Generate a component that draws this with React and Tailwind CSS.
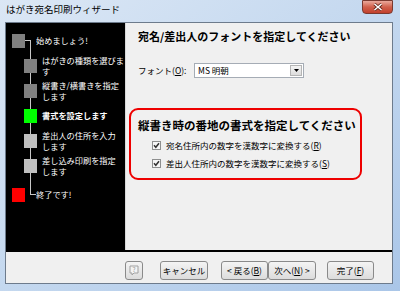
import React from 'react';

const FONT = { fontFamily: '"Noto Sans CJK JP", "Noto Sans", sans-serif' };

// wizard steps: state = done | current | todo | end
const steps = [
  { lines: ['始めましょう!'], state: 'done', top: true },
  { lines: ['はがきの種類を選びま', 'す'], state: 'done' },
  { lines: ['縦書き/横書きを指定', 'します'], state: 'done' },
  { lines: ['書式を設定します'], state: 'current' },
  { lines: ['差出人の住所を入力', 'します'], state: 'todo' },
  { lines: ['差し込み印刷を指定', 'します'], state: 'todo' },
];

const squareColor = {
  done: 'bg-[#808080]',
  current: 'bg-[#00ff00]',
  todo: 'bg-[#c0c0c0]',
  end: 'bg-[#ff0000]',
};

const Step = ({ step }) => (
  <div className="flex items-center h-[25px]">
    <div className={`w-[13px] h-[14px] shrink-0 ${squareColor[step.state]} ${step.top ? 'ml-[6px]' : 'ml-[18px]'}`} />
    <div
      className={`text-white text-[8.2px] leading-[11px] whitespace-nowrap ${step.top ? 'ml-[11px]' : 'ml-[5px]'} ${step.state === 'current' ? 'font-bold' : ''}`}
    >
      {step.lines.map((l, i) => (
        <div key={i}>{l}</div>
      ))}
    </div>
  </div>
);

const Check = () => (
  <svg width="9" height="9" viewBox="0 0 9 9" className="shrink-0">
    <rect x="0.5" y="0.5" width="8" height="8" fill="#f6f6f6" stroke="#8e8f8f" />
    <path d="M2 4.3 L3.8 6.3 L7 2.2" fill="none" stroke="#333" strokeWidth="1.5" />
  </svg>
);

const Button = ({ children, className = '', disabled }) => (
  <div
    className={`h-[19px] flex items-center justify-center rounded-[3px] border border-[#8a8a8a] bg-gradient-to-b from-[#f4f4f4] to-[#dcdcdc] text-[8.5px] ${disabled ? 'text-[#a0a0a0]' : 'text-black'} ${className}`}
  >
    {children}
  </div>
);

export default function App() {
  return (
    <div
      className="w-[400px] h-[291px] relative overflow-hidden bg-gradient-to-br from-[#dbe7f5] via-[#c4d8ef] to-[#aac6e8]"
      style={FONT}
    >
      {/* Title bar */}
      <div className="h-[22px] flex items-start">
        <div className="ml-[6px] mt-[4px] text-[9.5px] leading-[11px] text-black">はがき宛名印刷ウィザード</div>
        <div className="ml-auto mr-[7px] w-[31px] h-[14px] rounded-b-[4px] border border-[#7a3a30] bg-gradient-to-b from-[#e9a99c] via-[#d0604c] to-[#c2402c] flex items-center justify-center">
          <svg width="10" height="8" viewBox="0 0 10 8">
            <path d="M1.5 1 L8.5 7 M8.5 1 L1.5 7" stroke="#5a2418" strokeWidth="3" />
            <path d="M1.5 1 L8.5 7 M8.5 1 L1.5 7" stroke="#ffffff" strokeWidth="1.6" />
          </svg>
        </div>
      </div>

      {/* Client area */}
      <div className="ml-[5px] w-[388px] h-[262px] border border-[#6d7b8c] bg-[#f0f0f0] flex flex-col">
        <div className="flex h-[229px] border-b-2 border-black">
          {/* Sidebar */}
          <div className="w-[119px] bg-black relative pt-[5px] overflow-hidden">
            <div className="absolute left-[24px] top-[17px] w-[1px] h-[155px] bg-[#c8c8c8]" />
            <div className="absolute left-[19px] top-[17px] w-[6px] h-[1px] bg-[#c8c8c8]" />
            <div className="absolute left-[24px] top-[171px] w-[6px] h-[1px] bg-[#c8c8c8]" />
            <div className="relative">
              {steps.map((s, i) => (
                <Step key={i} step={s} />
              ))}
              <div className="flex items-center h-[25px] mt-[4px]">
                <div className="w-[13px] h-[14px] bg-[#ff0000] ml-[6px]" />
                <div className="text-white text-[8.2px] leading-[11px] ml-[11px]">終了です!</div>
              </div>
            </div>
          </div>

          {/* Right panel */}
          <div className="flex-1 border-l border-[#d8d8d8] flex flex-col">
            <div className="ml-[12px] mt-[6px] text-[11px] leading-[14px] font-bold text-black">
              宛名/差出人のフォントを指定してください
            </div>
            <div className="ml-[12px] mt-[20px] flex items-center text-[8.5px]">
              <span className="w-[56px]">
                フォント(<span className="underline">O</span>):
              </span>
              <div className="w-[110px] h-[15px] bg-white border border-[#a5acb5] flex items-center">
                <span className="ml-[3px] flex-1">MS 明朝</span>
                <div className="w-[12px] h-[11px] mr-[1px] border border-[#b5b5b5] bg-gradient-to-b from-[#f4f4f4] to-[#dcdcdc] flex items-center justify-center">
                  <svg width="5" height="3" viewBox="0 0 5 3">
                    <path d="M0 0 L5 0 L2.5 3 Z" fill="#000" />
                  </svg>
                </div>
              </div>
            </div>

            {/* Red highlight box */}
            <div className="ml-[3px] mt-[30px] w-[233px] h-[72px] border-2 border-[#ee0000] rounded-[9px] pl-[7px] pt-[8px]">
              <div className="text-[11.5px] leading-[14px] font-bold text-black">
                縦書き時の番地の書式を指定してください
              </div>
              <div className="ml-[14px] mt-[6px] h-[14px] flex items-center gap-[5px] text-[8.5px]">
                <Check />
                <span>
                  宛名住所内の数字を漢数字に変換する(<span className="underline">R</span>)
                </span>
              </div>
              <div className="ml-[14px] mt-[4px] h-[14px] flex items-center gap-[5px] text-[8.5px]">
                <Check />
                <span>
                  差出人住所内の数字を漢数字に変換する(<span className="underline">S</span>)
                </span>
              </div>
            </div>
          </div>
        </div>

        {/* Bottom buttons */}
        <div className="flex-1 flex items-start pt-[9px] pl-[119px]">
          <Button className="w-[18px]" disabled>
            <svg width="10" height="11" viewBox="0 0 10 11">
              <path d="M1 1 H9 V8 H5 L3 10 V8 H1 Z" fill="#f4f4f4" stroke="#a0a0a0" />
              <text x="5" y="7" textAnchor="middle" fontSize="6.5" fill="#a0a0a0">?</text>
            </svg>
          </Button>
          <Button className="w-[48px] ml-[17px]">キャンセル</Button>
          <Button className="w-[47px] ml-[13px]">
            &lt; 戻る(<span className="underline">B</span>)
          </Button>
          <Button className="w-[48px]">
            次へ(<span className="underline">N</span>) &gt;
          </Button>
          <Button className="w-[47px] ml-[11px]">
            完了(<span className="underline">F</span>)
          </Button>
        </div>
      </div>
    </div>
  );
}
